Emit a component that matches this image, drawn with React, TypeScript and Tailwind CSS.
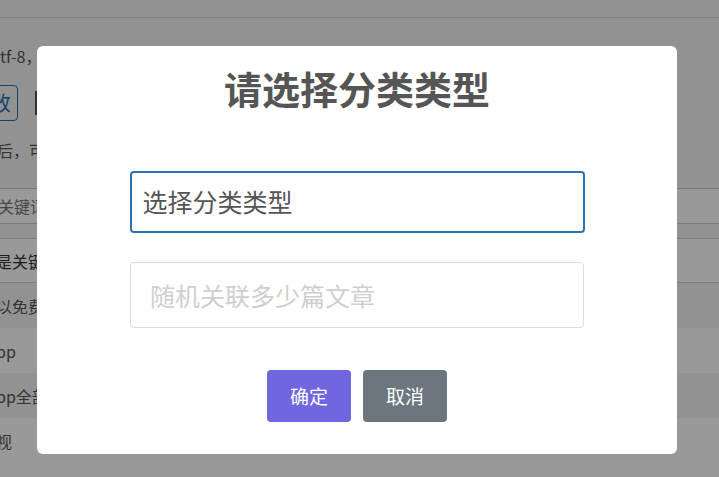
import React from "react";

const font = { fontFamily: '"Noto Sans CJK SC", "Noto Sans", sans-serif' };

const rows = [
  { text: "以免费", bg: "bg-[#f4f4f4]" },
  { text: "pp", bg: "bg-white" },
  { text: "pp全部", bg: "bg-[#f4f4f4]" },
  { text: "视", bg: "bg-white" },
];

const Page: React.FC = () => {
  return (
    <div className="flex flex-col w-full h-full bg-[#f3f3f3] text-[#555] text-[16px]">
      <div className="h-[18px] border-b border-[#d6d6d6] shrink-0" />
      <div className="h-[22px] mt-[27px] flex items-center">tf-8，</div>
      <div className="flex items-center h-[36px] mt-[18px] gap-[17px]">
        <div className="-ml-[22px] w-[40px] h-[36px] border border-[#2a6fb0] rounded-[4px] flex items-center pl-[12px] text-[20px] text-[#2a6fb0]">
          改
        </div>
        <div className="w-[12px] h-[24px] bg-[#555]" />
      </div>
      <div className="h-[30px] mt-[14px] flex items-center -ml-[3px]">后，可</div>
      <div className="mt-[23px] h-[36px] border-y border-[#ccc] bg-white flex items-center text-[#777] -ml-[2px]">关键词</div>
      <div className="h-[14px]" />
      <div className="h-[45px] border-y border-[#d0d0d0] bg-white flex items-center text-[#333] -ml-[4px]">是关键</div>
      {rows.map((r) => (
        <div key={r.text} className={`h-[45px] flex items-center ${r.bg} -ml-[4px]`}>
          {r.text}
        </div>
      ))}
      <div className="flex-1 bg-white" />
    </div>
  );
};

export default function App() {
  return (
    <div className="relative w-[719px] h-[477px] overflow-hidden" style={font}>
      <Page />
      <div className="absolute inset-0 bg-black/40 flex items-start pt-[46px] pl-[37px]">
        <div className="w-[640px] bg-white rounded-[6px] flex flex-col items-center pt-[19px] pb-[32px]">
          <h1 className="text-[38px] leading-[46px] font-bold text-[#555]">请选择分类类型</h1>
          <div className="mt-[60px] w-[455px] h-[62px] border-2 border-[#2a72b5] rounded-[4px] flex items-center pl-[11px] text-[25px] text-[#555]">
            选择分类类型
          </div>
          <input
            className="mt-[29px] w-[454px] h-[66px] border border-[#dcdcdc] rounded-[4px] pl-[19px] text-[25px] text-[#555] placeholder:text-[#cfcfcf] outline-none"
            placeholder="随机关联多少篇文章"
            style={font}
          />
          <div className="mt-[42px] flex gap-[12px]">
            <button className="w-[84px] h-[52px] rounded-[4px] bg-[#7066df] text-white text-[19px]">确定</button>
            <button className="w-[84px] h-[52px] rounded-[4px] bg-[#6c767e] text-white text-[19px]">取消</button>
          </div>
        </div>
      </div>
    </div>
  );
}
